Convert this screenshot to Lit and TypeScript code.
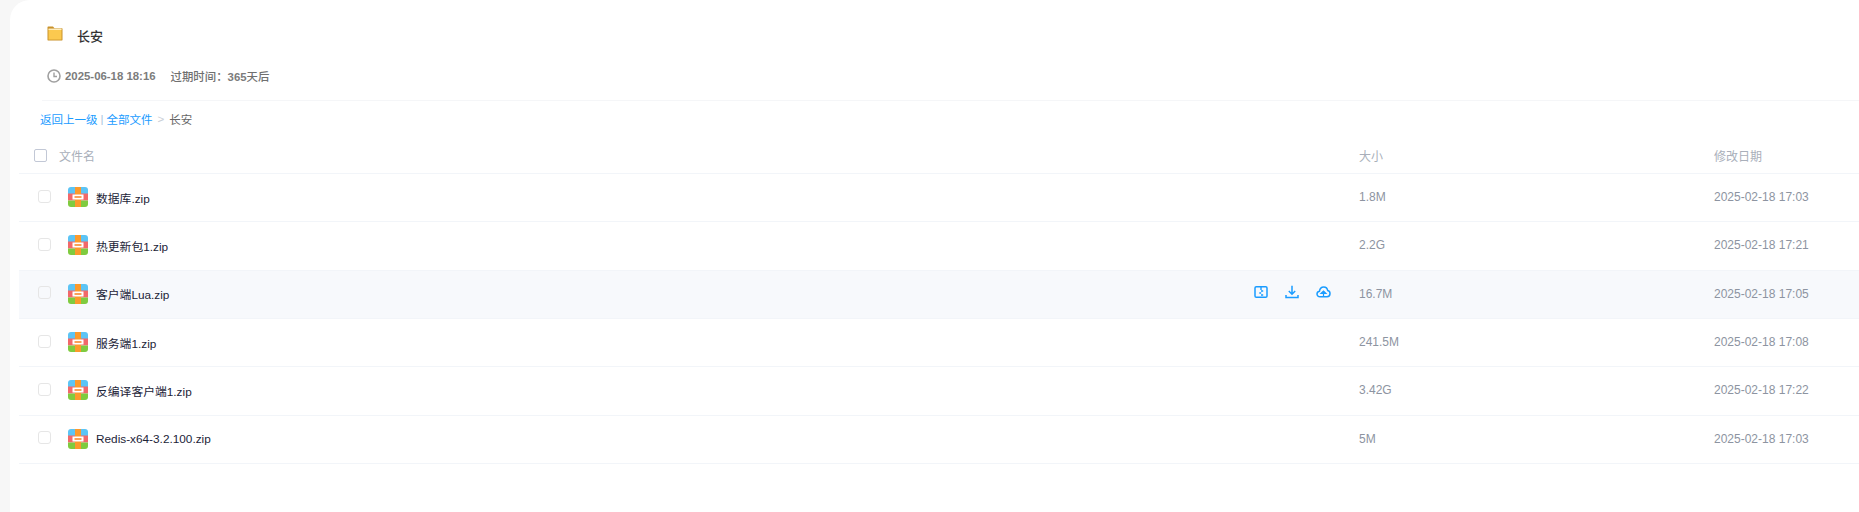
import { LitElement, html, css } from "lit";
import { customElement } from "lit/decorators.js";

const rows = [
  { name: "数据库.zip", size: "1.8M", date: "2025-02-18 17:03" },
  { name: "热更新包1.zip", size: "2.2G", date: "2025-02-18 17:21" },
  { name: "客户端Lua.zip", size: "16.7M", date: "2025-02-18 17:05", hover: true },
  { name: "服务端1.zip", size: "241.5M", date: "2025-02-18 17:08" },
  { name: "反编译客户端1.zip", size: "3.42G", date: "2025-02-18 17:22" },
  { name: "Redis-x64-3.2.100.zip", size: "5M", date: "2025-02-18 17:03" },
];

const zipIcon = html`<svg class="zip" width="20" height="20" viewBox="0 0 20 20">
  <defs><clipPath id="zc"><rect width="20" height="20" rx="3"/></clipPath></defs>
  <g clip-path="url(#zc)">
    <rect width="20" height="7" fill="#5cc4f5"/>
    <rect y="6.500" width="20" height="7" fill="#f2686a"/>
    <rect y="13.500" width="20" height="6.500" fill="#7fcb3f"/>
    <rect x="7" width="6" height="20" fill="#fb9a2c"/>
    <rect x="4.500" y="7.500" width="11" height="5" fill="#fff"/>
    <rect x="6.500" y="9" width="7" height="2" fill="#f9a05a"/>
  </g>
</svg>`;

const folderIcon = html`<svg width="16" height="15" viewBox="0 0 16 15">
  <path d="M0.500 1.200C0.500.8.8.5 1.200.5H6L7.500 2.200H15c.3 0 .5.2.5.5V14c0 .3-.2.5-.5.5H1c-.3 0-.5-.2-.5-.5Z" fill="#c9922a"/>
  <rect x="1.500" y="3" width="13" height="10.600" fill="#fbc94f"/>
  <rect x="1.500" y="2.600" width="13" height="1.200" fill="#fff6d8"/>
</svg>`;

const clockIcon = html`<svg width="14" height="14" viewBox="0 0 14 14" fill="none" stroke="#a0a0a0">
  <circle cx="7" cy="7" r="6" stroke-width="1.600"/>
  <path d="M7 3.500v4h3" stroke-width="1.400"/>
</svg>`;

const actionIcons = html`<div class="actions">
  <svg width="14" height="14" viewBox="0 0 14 14" fill="none" stroke="#1a9cff" stroke-width="1.500">
    <path d="M1 3c0-.8.5-1.300 1.300-1.300h9.400c.8 0 1.300.5 1.300 1.300v8c0 .8-.5 1.300-1.300 1.300H2.300C1.500 12.300 1 11.800 1 11Z"/>
    <path d="M7 2v3M7 6h2.200M5.300 8H7.200M7 10h2.200" stroke-width="1.400"/>
  </svg>
  <svg width="14" height="14" viewBox="0 0 14 14" fill="none" stroke="#1a9cff" stroke-width="1.500">
    <path d="M7 .8v8.400M3.800 6 7 9.200 10.200 6M1 10v2.600h12V10"/>
  </svg>
  <svg width="15" height="14" viewBox="0 0 15 14" fill="none" stroke="#1a9cff" stroke-width="1.500">
    <path d="M4 11.800C2.200 11.800 1 10.500 1 9c0-1.500 1-2.600 2.500-2.800C3.800 3.800 5.500 2 7.700 2c2.100 0 3.700 1.500 4 3.600 1.300.3 2.300 1.600 2.300 3 0 1.800-1.300 3.200-3 3.200Z"/>
    <path d="M5 8.500 7.500 6 10 8.500ZM7.500 8v3.500" fill="#1a9cff" stroke-width="1.200"/>
  </svg>
</div>`;

@customElement("app-root")
export class AppRoot extends LitElement {
  static styles = css`
    :host {
      display: block;
      width: 1859px;
      height: 512px;
      background: #f7f7f7;
      overflow: hidden;
      font-family: "Liberation Sans", "Noto Sans CJK SC", sans-serif;
      font-size: 12px;
    }
    .panel {
      margin-left: 10px;
      height: 512px;
      background: #fff;
      border-radius: 20px 0 0 0;
      padding-left: 9px;
      box-sizing: border-box;
    }
    .head {
      margin-left: 23px;
      height: 100px;
      border-bottom: 1px solid #f5f6f8;
    }
    .title {
      display: flex;
      align-items: center;
      height: 24px;
      padding-top: 23px;
      padding-left: 5px;
      font-size: 13px;
      font-weight: 500;
      color: #333;
      gap: 14px;
    }
    .title svg { margin-top: -3px; }
    .meta {
      display: flex;
      align-items: center;
      margin-top: 19px;
      height: 20px;
      padding-left: 5px;
      color: #707070;
      font-size: 11.4px;
      font-weight: 500;
    }
    .meta svg { margin-right: 4px; }
    .meta .exp { margin-left: 15px; }
    .meta b { font-weight: 700; color: #7c7c7c; }
    .crumb {
      margin-left: 21px;
      height: 37px;
      padding-bottom: 2px;
      box-sizing: border-box;
      display: flex;
      align-items: center;
      font-size: 11.5px;
      color: #1a9cff;
    }
    .crumb .sep { color: #a8c4dc; margin: 0 3px; }
    .crumb .gt { color: #c9ced6; margin: 0 5px; }
    .crumb .cur { color: #666; }
    .row {
      display: grid;
      grid-template-columns: 1340px 355px 1fr;
      align-items: center;
      height: 48.33px;
      box-sizing: border-box;
      border-bottom: 1px solid #f2f5f9;
      padding-bottom: 1px;
      color: #8d94a1;
    }
    .row.hd {
      height: 36px;
      padding-bottom: 0;
      color: #a9afba;
    }
    .row.hover { background: #f7f9fc; }
    .name {
      display: flex;
      align-items: center;
      position: relative;
    }
    .cb {
      width: 11px;
      height: 11px;
      border: 1px solid #e6e6e6;
      border-radius: 3px;
      margin-left: 19px;
      margin-right: 17px;
      margin-top: -2px;
    }
    .hd .name .cb {
      width: 11px;
      height: 11px;
      border: 1px solid #c2c8d6;
      border-radius: 2px;
      margin-left: 15px;
      margin-right: 12px;
      margin-top: 0;
    }
    .zip { margin-right: 8px; flex: none; }
    .fname { color: #1c2438; font-size: 11.8px; }
    .actions {
      position: absolute;
      right: 0;
      top: 50%;
      transform: translateY(calc(-50% - 2px));
      display: flex;
      gap: 17px;
      align-items: center;
      padding-right: 28px;
    }
  `;

  render() {
    return html`<div class="panel">
      <div class="head">
        <div class="title">${folderIcon}<span>长安</span></div>
        <div class="meta">${clockIcon}<b>2025-06-18 18:16</b><span class="exp">过期时间：<b>365</b>天后</span></div>
      </div>
      <div class="crumb"><span>返回上一级</span><span class="sep">|</span><span>全部文件</span><span class="gt">&gt;</span><span class="cur">长安</span></div>
      <div>
        <div class="row hd">
          <div class="name"><span class="cb"></span><span>文件名</span></div>
          <div>大小</div>
          <div>修改日期</div>
        </div>
        ${rows.map(
          (r) => html`<div class="row ${r.hover ? "hover" : ""}">
            <div class="name"><span class="cb"></span>${zipIcon}<span class="fname">${r.name}</span>${r.hover ? actionIcons : ""}</div>
            <div>${r.size}</div>
            <div>${r.date}</div>
          </div>`
        )}
      </div>
    </div>`;
  }
}
